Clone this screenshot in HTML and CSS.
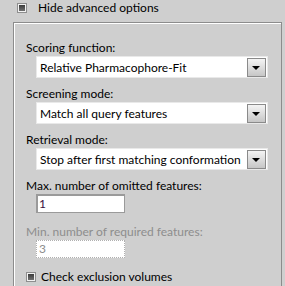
FILE: index.html
```html
<!DOCTYPE html>
<html lang="en">
<head>
    <meta charset="UTF-8">
    <title>Screening options</title>
    <link rel="stylesheet" href="styles.css">
</head>
<body>
    <div class="toggle-row">
        <span class="check"></span>
        <span>Hide advanced options</span>
    </div>

    <div class="group">
        <div class="field-label">Scoring function:</div>
        <div class="combo">
            <span class="combo-text">Relative Pharmacophore-Fit</span>
            <span class="combo-btn"></span>
        </div>

        <div class="field-label">Screening mode:</div>
        <div class="combo">
            <span class="combo-text">Match all query features</span>
            <span class="combo-btn"></span>
        </div>

        <div class="field-label">Retrieval mode:</div>
        <div class="combo">
            <span class="combo-text">Stop after first matching conformation</span>
            <span class="combo-btn"></span>
        </div>

        <div class="field-label">Max. number of omitted features:</div>
        <div class="spin">1</div>

        <div class="field-label disabled">Min. number of required features:</div>
        <div class="spin disabled">3</div>

        <div class="toggle-row inner">
            <span class="check"></span>
            <span>Check exclusion volumes</span>
        </div>
    </div>
</body>
</html>
```

FILE: styles.css
```css
body {
    margin: 0;
    background-color: #cfcfcf;
    font-family: "Segoe UI", Lato, "Open Sans", sans-serif;
    font-size: 12px;
    color: #000000;
    overflow: hidden;
}

.toggle-row {
    display: flex;
    align-items: center;
    height: 16px;
    padding-left: 17px;
    line-height: 16px;
}

.toggle-row.inner {
    padding-left: 0;
    margin-top: 11px;
}

.check {
    width: 8px;
    height: 8px;
    margin-right: 11px;
    border: 1px solid #8e8e8e;
    background: #f2f2f2;
    position: relative;
}

.toggle-row.inner .check {
    margin-right: 5px;
}

.check::after {
    content: "";
    position: absolute;
    left: 1px;
    top: 1px;
    width: 6px;
    height: 6px;
    background: linear-gradient(#3c3c3c, #707070);
}

.group {
    margin: 6px 3px 0 13px;
    height: 300px;
    border: 1px solid #8c8c8c;
    border-bottom: none;
    box-shadow: inset 1px 1px 0 #ffffff;
    padding: 16px 0 0 12px;
    display: flex;
    flex-direction: column;
    align-items: flex-start;
}

.field-label {
    line-height: 16px;
    height: 16px;
    padding-top: 1px;
}

.field-label.disabled {
    color: #8d8d8d;
    margin-top: 10px;
}

.combo {
    display: flex;
    align-items: center;
    width: 230px;
    height: 20px;
    margin: 0 0 7px 10px;
    background: #ffffff;
    border: 1px solid #e9e9e9;
}

.combo-text {
    flex: 1;
    padding-left: 3px;
    white-space: nowrap;
}

.combo-btn {
    width: 17px;
    height: 17px;
    margin-right: 1px;
    border: 1px solid #8a8a8a;
    background: linear-gradient(#f4f4f4, #c6c6c6);
    position: relative;
}

.combo-btn::after {
    content: "";
    position: absolute;
    left: 4px;
    top: 7px;
    border-left: 4px solid transparent;
    border-right: 4px solid transparent;
    border-top: 4px solid #000000;
}

.spin {
    width: 85px;
    height: 17px;
    margin: 0 0 0 10px;
    padding-left: 2px;
    line-height: 17px;
    background: #ffffff;
    border: 1px solid #9a9a9a;
    box-shadow: inset 1px 1px 0 #9a9a9a;
    color: #3a1040;
}

.spin.disabled {
    height: 16px;
    line-height: 16px;
    border: 1px dotted #b0b0b0;
    box-shadow: none;
    color: #8d8d8d;
}
```
